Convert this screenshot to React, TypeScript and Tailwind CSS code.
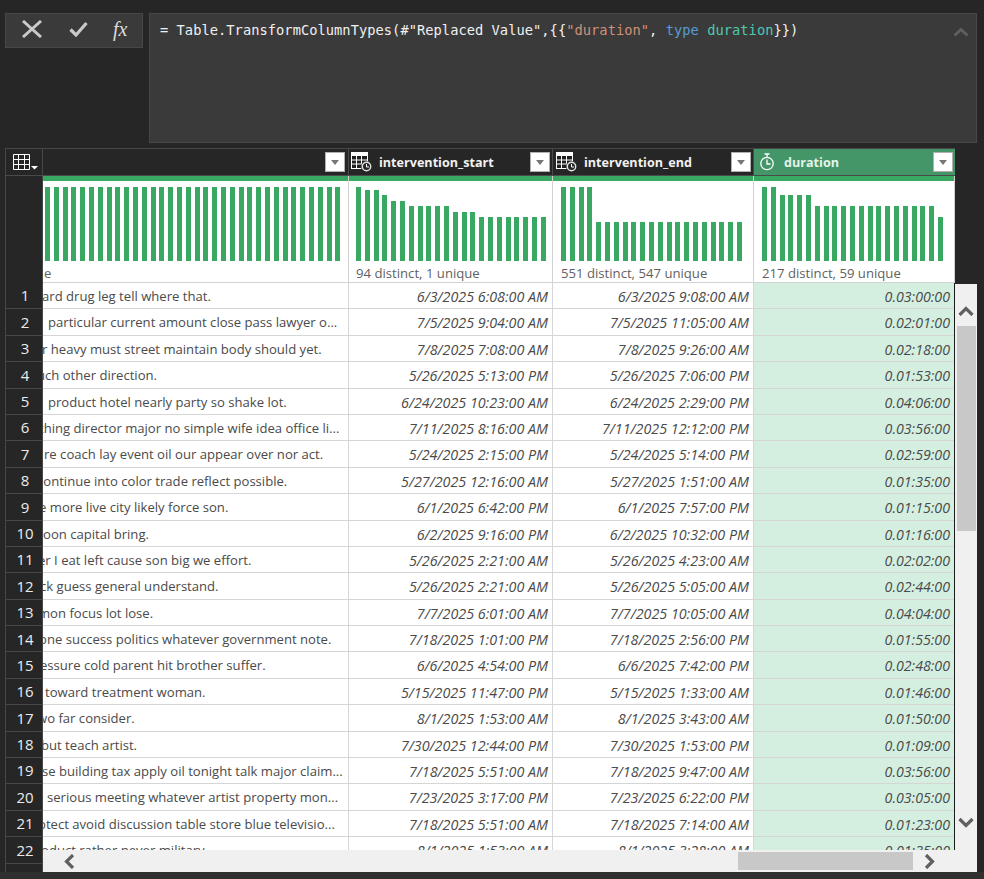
const rows: [string, number, string, string, string][] = [
  ["ard drug leg tell where that.", -1, "6/3/2025 6:08:00 AM", "6/3/2025 9:08:00 AM", "0.03:00:00"],
  ["particular current amount close pass lawyer o...", 5, "7/5/2025 9:04:00 AM", "7/5/2025 11:05:00 AM", "0.02:01:00"],
  ["r heavy must street maintain body should yet.", -1, "7/8/2025 7:08:00 AM", "7/8/2025 9:26:00 AM", "0.02:18:00"],
  ["uch other direction.", -6, "5/26/2025 5:13:00 PM", "5/26/2025 7:06:00 PM", "0.01:53:00"],
  ["product hotel nearly party so shake lot.", 5, "6/24/2025 10:23:00 AM", "6/24/2025 2:29:00 PM", "0.04:06:00"],
  ["thing director major no simple wife idea office li...", -4, "7/11/2025 8:16:00 AM", "7/11/2025 12:12:00 PM", "0.03:56:00"],
  ["re coach lay event oil our appear over nor act.", 1, "5/24/2025 2:15:00 PM", "5/24/2025 5:14:00 PM", "0.02:59:00"],
  ["continue into color trade reflect possible.", -6, "5/27/2025 12:16:00 AM", "5/27/2025 1:51:00 AM", "0.01:35:00"],
  ["e more live city likely force son.", -4, "6/1/2025 6:42:00 PM", "6/1/2025 7:57:00 PM", "0.01:15:00"],
  ["oon capital bring.", 0, "6/2/2025 9:16:00 PM", "6/2/2025 10:32:00 PM", "0.01:16:00"],
  ["er I eat left cause son big we effort.", -5, "5/26/2025 2:21:00 AM", "5/26/2025 4:23:00 AM", "0.02:02:00"],
  ["ck guess general understand.", -3, "5/26/2025 2:21:00 AM", "5/26/2025 5:05:00 AM", "0.02:44:00"],
  ["mon focus lot lose.", -5, "7/7/2025 6:01:00 AM", "7/7/2025 10:05:00 AM", "0.04:04:00"],
  ["one success politics whatever government note.", -4, "7/18/2025 1:01:00 PM", "7/18/2025 2:56:00 PM", "0.01:55:00"],
  ["essure cold parent hit brother suffer.", -3, "6/6/2025 4:54:00 PM", "6/6/2025 7:42:00 PM", "0.02:48:00"],
  ["toward treatment woman.", 2, "5/15/2025 11:47:00 PM", "5/15/2025 1:33:00 AM", "0.01:46:00"],
  ["wo far consider.", -6, "8/1/2025 1:53:00 AM", "8/1/2025 3:43:00 AM", "0.01:50:00"],
  ["but teach artist.", -2, "7/30/2025 12:44:00 PM", "7/30/2025 1:53:00 PM", "0.01:09:00"],
  ["se building tax apply oil tonight talk major claim...", -1, "7/18/2025 5:51:00 AM", "7/18/2025 9:47:00 AM", "0.03:56:00"],
  ["serious meeting whatever artist property mon...", 4, "7/23/2025 3:17:00 PM", "7/23/2025 6:22:00 PM", "0.03:05:00"],
  ["otect avoid discussion table store blue televisio...", -5, "7/18/2025 5:51:00 AM", "7/18/2025 7:14:00 AM", "0.01:23:00"],
  ["oduct rather never military.", -2, "8/1/2025 1:53:00 AM", "8/1/2025 3:28:00 AM", "0.01:35:00"],
];

const bars1 = Array(34).fill(74);
const bars2 = [74, 71, 71, 66, 60, 60, 55, 55, 55, 55, 55, 49, 49, 49, 44, 44, 44, 44, 44, 44, 44, 44];
const bars3 = [74, 74, 74, 74, ...Array(17).fill(39)];
const bars4 = [74, 74, 66, 66, 66, 66, ...Array(14).fill(55), 44];

function Bars({ values }: { values: number[] }) {
  return (
    <div className="flex h-[74px] items-end gap-[3.8px]">
      {values.map((h, i) => (
        <div key={i} className="w-[5px] bg-[#38a862]" style={{ height: h }} />
      ))}
    </div>
  );
}

function Dropdown() {
  return (
    <div className="flex h-[20px] w-[20px] shrink-0 items-center justify-center border border-[#b0b0b0] bg-white">
      <svg width="10" height="5" viewBox="0 0 10 5">
        <path d="M1 0h8L5 5z" fill="#767676" />
      </svg>
    </div>
  );
}

function DateTimeIcon() {
  return (
    <svg width="21" height="20" viewBox="0 0 21 20" className="shrink-0">
      <rect x="0.5" y="0.5" width="16" height="16" fill="#1f1f1f" stroke="#fff" />
      <rect x="1" y="1" width="15" height="3" fill="#fff" />
      <path d="M5.5 4v12M10.5 4v12M1 8h15M1 12h15" stroke="#fff" />
      <circle cx="15.5" cy="14.5" r="5.5" fill="#262626" />
      <circle cx="15.5" cy="14.5" r="4.2" fill="none" stroke="#e4e4e4" strokeWidth="1.4" />
      <path d="M15.5 12v3h2.5" fill="none" stroke="#fff" />
    </svg>
  );
}

function StopwatchIcon() {
  return (
    <svg width="16" height="18" viewBox="0 0 16 18" className="shrink-0" fill="none" stroke="#fff" strokeWidth="1.3">
      <circle cx="8" cy="10.5" r="6.2" />
      <path d="M5.5 1h5M8 1v3M8 6.5v4.5h3.5" />
    </svg>
  );
}

function Chevron({ dir }: { dir: "up" | "down" | "left" | "right" }) {
  const d = {
    up: "M1.5 10 8 3.5 14.5 10",
    down: "M1.5 2 8 8.5 14.5 2",
    left: "M10 1 3.5 7.5 10 14",
    right: "M3 1 9.5 7.5 3 14",
  }[dir];
  const vertical = dir === "up" || dir === "down";
  return (
    <svg
      width={vertical ? 16 : 13}
      height={vertical ? 11 : 15}
      viewBox={vertical ? "0 0 16 11" : "0 0 13 15"}
      fill="none"
      stroke="#606060"
      strokeWidth="3.2"
      className="shrink-0"
    >
      <path d={d} />
    </svg>
  );
}

function HeaderCell({ title, box }: { title: string; box: string }) {
  return (
    <div className={`flex shrink-0 items-center border-r border-[#4a4a4a] pr-[2px] ${box}`}>
      <DateTimeIcon />
      <span className="ml-[7px] flex-1 pt-[2px] text-[12.6px] font-bold text-[#f2f2f2]">{title}</span>
      <Dropdown />
    </div>
  );
}

export default function App() {
  return (
    <div className="flex h-[879px] w-[984px] flex-col overflow-hidden bg-[#262626] font-['Open_Sans','Noto_Sans',sans-serif]">
      {/* formula bar */}
      <div className="flex h-[148px] shrink-0 gap-[6px] pl-[5px] pr-[7px] pt-[13px]">
        <div className="flex h-[35px] w-[138px] items-center border border-[#474747] bg-[#3a3a3a] pb-[3px]">
          <svg width="20" height="18" viewBox="0 0 20 18" className="ml-[16px]" fill="none" stroke="#c9c9c9" strokeWidth="3">
            <path d="M1 1l18 16M19 1 1 17" />
          </svg>
          <svg width="19" height="16" viewBox="0 0 19 16" className="ml-[27px]" fill="none" stroke="#c9c9c9" strokeWidth="3.2">
            <path d="M1.5 8.5 7 14 17.5 2" />
          </svg>
          <span className="ml-[25px] font-['Liberation_Serif',serif] text-[20px] italic leading-none text-[#dcdcdc]">
            fx
          </span>
        </div>
        <div className="flex h-[130px] flex-1 items-start justify-between border border-[#474747] bg-[#3a3a3a] pl-[10px] pr-[7px] pt-[6px]">
          <p className="whitespace-pre font-['DejaVu_Sans_Mono',monospace] text-[13.73px] leading-[20px] tracking-[0.03px] text-[#f0f0f0]">
            = Table.TransformColumnTypes(#"Replaced Value",{"{{"}
            <span className="text-[#ce9178]">"duration"</span>, <span className="text-[#569cd6]">type</span>{" "}
            <span className="text-[#4ec9b0]">duration</span>
            {"}})"}
          </p>
          <div className="mt-[7px]">
            <svg width="16" height="10" viewBox="0 0 16 10" fill="none" stroke="#5f5f5f" strokeWidth="3">
              <path d="M1.5 8.5 8 2.5l6.5 6" />
            </svg>
          </div>
        </div>
      </div>

      {/* table */}
      <div className="ml-[5px] mr-[7px] flex h-[724px] flex-col">
        <div className="flex h-[28px] w-[950px] shrink-0 border-y border-[#474747] border-b-[#4a4a4a]">
          <div className="flex w-[38px] shrink-0 items-center border-x border-[#474747] pl-[7px]">
            <svg width="25" height="16" viewBox="0 0 25 16" fill="none" stroke="#fff">
              <path d="M.5.5h16v15H.5zM.5 5.5h16M.5 10.5h16M5.5.5v15M11.5.5v15" />
              <path d="M18 12h7l-3.5 3.5z" fill="#fff" stroke="none" />
            </svg>
          </div>
          <div className="flex w-[306px] shrink-0 items-center justify-end border-r border-[#4a4a4a] pr-[3px]">
            <Dropdown />
          </div>
          <HeaderCell title="intervention_start" box="w-[204px] pl-[2px]" />
          <HeaderCell title="intervention_end" box="w-[201px] pl-[3px]" />
          <div className="flex w-[201px] shrink-0 items-center bg-[#449669] pl-[5px] pr-[2px]">
            <StopwatchIcon />
            <span className="ml-[9px] flex-1 pt-[2px] text-[12.6px] font-bold text-[#e4f4ea]">duration</span>
            <Dropdown />
          </div>
        </div>

        <div className="flex h-[107px] shrink-0">
          <div className="w-[38px] shrink-0 border-x border-[#474747]" />
          {[
            { w: "w-[306px]", pl: "pl-[2px]", bars: bars1, note: "e", ml: "-ml-[1px]" },
            { w: "w-[204px]", pl: "pl-[7px]", bars: bars2, note: "94 distinct, 1 unique", ml: "" },
            { w: "w-[201px]", pl: "pl-[8px]", bars: bars3, note: "551 distinct, 547 unique", ml: "" },
            { w: "w-[201px]", pl: "pl-[8px]", bars: bars4, note: "217 distinct, 59 unique", ml: "" },
          ].map((c) => (
            <div key={c.note} className={`${c.w} shrink-0 overflow-hidden border-b border-r border-[#d2d2d2] bg-white`}>
              <div className="h-[5px] bg-[#38a862]" />
              <div className={`pt-[6px] ${c.pl}`}>
                <Bars values={c.bars} />
              </div>
              <p className={`mt-[3px] whitespace-nowrap text-[13.15px] leading-[18px] text-[#5f5f5f] ${c.pl} ${c.ml}`}>
                {c.note}
              </p>
            </div>
          ))}
        </div>

        <div className="flex min-h-0 flex-1">
          <div className="w-[38px] shrink-0 overflow-hidden border-x border-[#474747]">
            {rows.map((_, i) => (
              <div
                key={i}
                className="flex h-[26.4px] items-center justify-center border-b border-[#474747] pl-[2px] text-[15px] text-[#ececec]"
              >
                {i + 1}
              </div>
            ))}
          </div>

          <div className="flex min-w-0 flex-1 flex-col">
            <div className="flex h-[567px] shrink-0">
              <div className="w-[912px] shrink-0 overflow-hidden border-r border-[#1b1b1b] bg-white text-[13.1px] text-[#4a4a4a]">
                {rows.map(([text, indent, start, end, duration]) => (
                  <div key={start + end} className="flex h-[26.4px]">
                    <div className="w-[306px] shrink-0 overflow-hidden whitespace-nowrap border-b border-r border-[#d6d6d6] leading-[27px]">
                      <span className="inline-block" style={{ marginLeft: indent }}>
                        {text}
                      </span>
                    </div>
                    <div className="w-[204px] shrink-0 border-b border-r border-[#d6d6d6] pr-[4px] text-right text-[14.3px] italic leading-[27px]">
                      {start}
                    </div>
                    <div className="w-[201px] shrink-0 border-b border-r border-[#d6d6d6] pr-[4px] text-right text-[14.3px] italic leading-[27px]">
                      {end}
                    </div>
                    <div className="w-[200px] shrink-0 border-b border-[#d6d6d6] bg-[#d4efe0] pr-[4px] text-right text-[14.2px] italic leading-[27px]">
                      {duration}
                    </div>
                  </div>
                ))}
              </div>
              <div className="mt-[1px] flex w-[22px] shrink-0 flex-col items-center bg-[#f0f0f0] pt-[21px]">
                <Chevron dir="up" />
                <div className="mt-[10px] h-[205px] w-[19px] bg-[#c8c8c8]" />
                <div className="mt-[286px]">
                  <Chevron dir="down" />
                </div>
              </div>
            </div>
            <div className="flex h-[22px] shrink-0 items-center bg-[#f0f0f0] pl-[20px]">
              <Chevron dir="left" />
              <div className="ml-[662px] h-[18px] w-[175px] bg-[#c8c8c8]" />
              <div className="ml-[10px]">
                <Chevron dir="right" />
              </div>
            </div>
          </div>
        </div>
      </div>

      <div className="h-[7px] shrink-0 bg-[#2f2f2f]" />
    </div>
  );
}
